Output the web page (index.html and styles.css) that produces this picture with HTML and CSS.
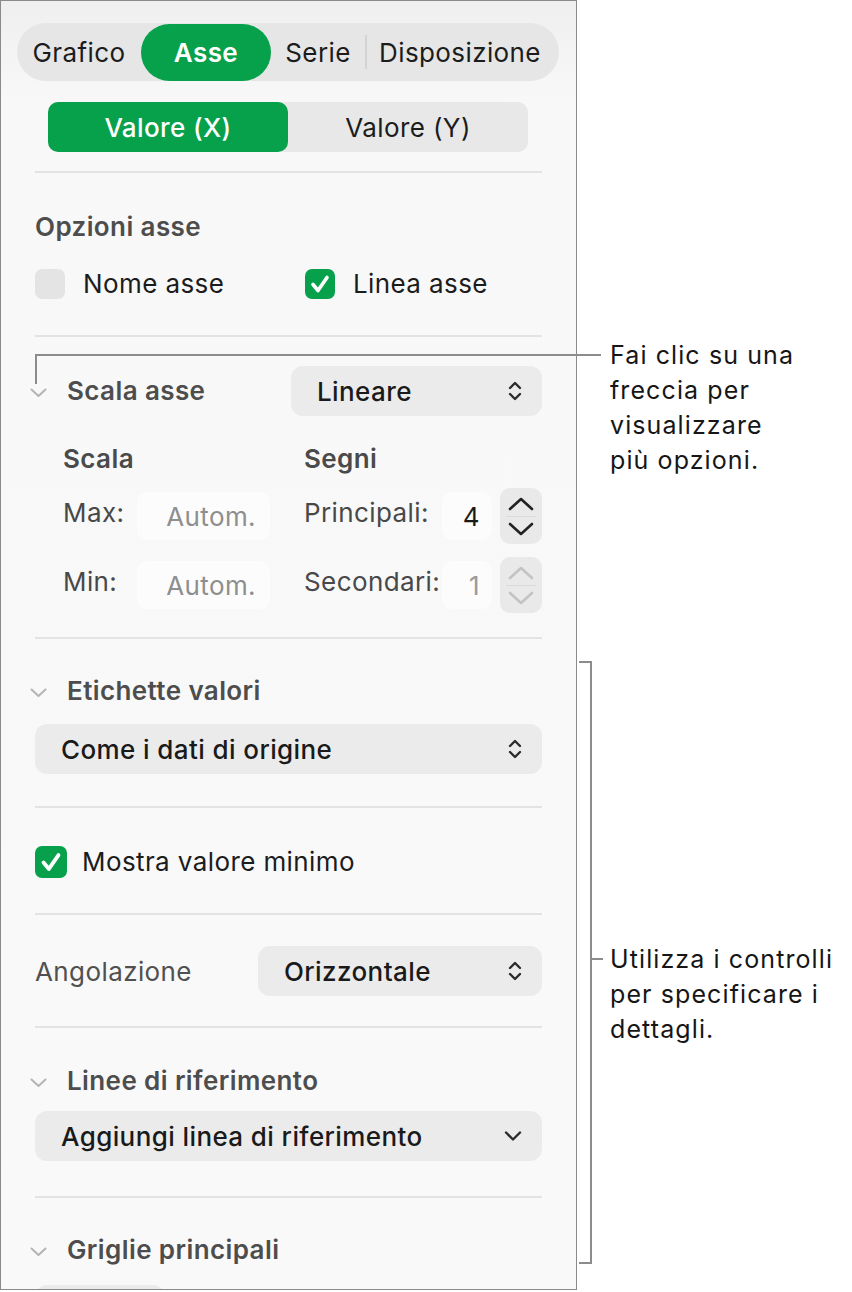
FILE: index.html
```html
<!DOCTYPE html>
<html lang="it">
<head>
  <meta charset="UTF-8">
  <title>Formato grafico - Asse</title>
  <link rel="stylesheet" href="styles.css">
</head>
<body>
  <div class="figure">

    <!-- Inspector panel -->
    <div class="inspector">
      <div class="tabs">
        <span class="tab tab-chart">Grafico</span>
        <span class="tab tab-axis active">Asse</span>
        <span class="tab tab-series">Serie</span>
        <span class="tab-sep"></span>
        <span class="tab tab-layout">Disposizione</span>
      </div>

      <div class="axis-switch">
        <span class="axis-btn active">Valore (X)</span>
        <span class="axis-btn">Valore (Y)</span>
      </div>

      <!-- Axis options -->
      <section class="group g-options">
        <div class="group-title">Opzioni asse</div>
        <div class="check-row">
          <label class="check check-name"><span class="box"></span>Nome asse</label>
          <label class="check"><span class="box on">
            <svg width="30" height="30" viewBox="0 0 30 30"><path d="M8 15.5 L13 21.5 L22 8.5" /></svg>
          </span>Linea asse</label>
        </div>
      </section>

      <!-- Axis scale -->
      <section class="group g-scale">
        <div class="disclosure-row">
          <span class="disclosure">
            <svg width="17" height="10" viewBox="0 0 17 10"><path d="M1.5 1.5 L8.5 8 L15.5 1.5" /></svg>
          </span>
          <span class="group-title">Scala asse</span>
          <div class="popup popup-scale">
            <span>Lineare</span>
            <svg class="updown" width="14" height="24" viewBox="0 0 14 24"><path d="M2 9 L7 4 L12 9 M2 15 L7 20 L12 15" /></svg>
          </div>
        </div>

        <div class="scale-grid">
          <div class="sub-title col-left">Scala</div>
          <div class="sub-title col-right">Segni</div>

          <div class="scale-label">Max:</div>
          <div class="field placeholder">Autom.</div>
          <div class="scale-label col-right">Principali:</div>
          <div class="field value">4</div>
          <div class="stepper">
            <svg width="26" height="14" viewBox="0 0 26 14"><path d="M2 12 L13 2 L24 12" /></svg>
            <span class="stepper-line"></span>
            <svg width="26" height="14" viewBox="0 0 26 14"><path d="M2 2 L13 12 L24 2" /></svg>
          </div>

          <div class="scale-label">Min:</div>
          <div class="field placeholder">Autom.</div>
          <div class="scale-label col-right">Secondari:</div>
          <div class="field value dim">1</div>
          <div class="stepper disabled">
            <svg width="26" height="14" viewBox="0 0 26 14"><path d="M2 12 L13 2 L24 12" /></svg>
            <span class="stepper-line"></span>
            <svg width="26" height="14" viewBox="0 0 26 14"><path d="M2 2 L13 12 L24 2" /></svg>
          </div>
        </div>
      </section>

      <!-- Value labels -->
      <section class="group g-labels">
        <div class="disclosure-row">
          <span class="disclosure">
            <svg width="17" height="10" viewBox="0 0 17 10"><path d="M1.5 1.5 L8.5 8 L15.5 1.5" /></svg>
          </span>
          <span class="group-title">Etichette valori</span>
        </div>
        <div class="popup popup-wide">
          <span>Come i dati di origine</span>
          <svg class="updown" width="14" height="24" viewBox="0 0 14 24"><path d="M2 9 L7 4 L12 9 M2 15 L7 20 L12 15" /></svg>
        </div>
      </section>

      <section class="group g-min">
        <label class="check"><span class="box on">
          <svg width="32" height="32" viewBox="0 0 30 30"><path d="M8 15.5 L13 21.5 L22 8.5" /></svg>
        </span>Mostra valore minimo</label>
      </section>

      <section class="group g-angle">
        <div class="angle-row">
          <span class="plain-label">Angolazione</span>
          <div class="popup popup-angle">
            <span>Orizzontale</span>
            <svg class="updown" width="14" height="24" viewBox="0 0 14 24"><path d="M2 9 L7 4 L12 9 M2 15 L7 20 L12 15" /></svg>
          </div>
        </div>
      </section>

      <!-- Reference lines -->
      <section class="group g-ref">
        <div class="disclosure-row">
          <span class="disclosure">
            <svg width="17" height="10" viewBox="0 0 17 10"><path d="M1.5 1.5 L8.5 8 L15.5 1.5" /></svg>
          </span>
          <span class="group-title">Linee di riferimento</span>
        </div>
        <div class="popup popup-wide">
          <span>Aggiungi linea di riferimento</span>
          <svg class="down" width="18" height="12" viewBox="0 0 18 12"><path d="M2 2.5 L9 9.5 L16 2.5" /></svg>
        </div>
      </section>

      <section class="group g-grid">
        <div class="disclosure-row">
          <span class="disclosure">
            <svg width="17" height="10" viewBox="0 0 17 10"><path d="M1.5 1.5 L8.5 8 L15.5 1.5" /></svg>
          </span>
          <span class="group-title">Griglie principali</span>
        </div>
        <div class="popup-stub"></div>
      </section>
    </div>

    <!-- Callouts -->
    <div class="lead lead-h"></div>
    <div class="lead lead-v"></div>
    <div class="note note-arrow">Fai clic su una<br>freccia per<br>visualizzare<br>più opzioni.</div>

    <div class="lead bracket"></div>
    <div class="lead bracket-top"></div>
    <div class="lead bracket-bottom"></div>
    <div class="lead bracket-tick"></div>
    <div class="note note-controls">Utilizza i controlli<br>per specificare i<br>dettagli.</div>
  </div>
</body>
</html>
```

FILE: styles.css
```css
/* Inspector panel with two callouts */
* {
  box-sizing: border-box;
}

body {
  margin: 0;
  background: #fff;
  font-family: Inter, "Noto Sans", sans-serif;
  color: #1c1c1c;
}

.figure {
  position: relative;
  width: 852px;
  height: 1292px;
}

.inspector {
  width: 577px;
  height: 1290px;
  border: 1px solid #8a8a8a;
  background: linear-gradient(#efefef, #f8f8f8 100px, #f9f9f9);
  padding: 22px 34px 0;
  overflow: hidden;
  letter-spacing: 0.4px;
}

/* Top tabs */
.tabs {
  display: flex;
  align-items: center;
  height: 58px;
  margin: 0 -17px 0 -18px;
  background: #e6e6e6;
  border-radius: 29px;
  font-size: 26px;
}

.tab {
  display: flex;
  align-items: center;
  justify-content: center;
  height: 100%;
}

.tab-chart { width: 124px; }
.tab-axis { width: 130px; }
.tab-series { width: 94px; }
.tab-layout { flex: 1; padding-right: 6px; }

.tab.active {
  height: 57px;
  background: #07a14c;
  color: #fff;
  border-radius: 29px;
  font-weight: 600;
}

.tab-sep {
  width: 2px;
  height: 34px;
  background: #d4d4d4;
}

.axis-switch {
  display: flex;
  width: 480px;
  height: 50px;
  margin: 21px 0 0 13px;
  background: #e8e8e8;
  border-radius: 10px;
  font-size: 26px;
}

.axis-btn {
  flex: 1;
  display: flex;
  align-items: center;
  justify-content: center;
}

.axis-btn.active {
  background: #07a14c;
  color: #fff;
  border-radius: 10px;
  font-weight: 500;
}

/* Sections */
.group {
  border-top: 2px solid #e3e3e3;
}

.group-title {
  font-size: 26px;
  line-height: 32px;
  font-weight: 600;
  color: #4d4d4d;
}

.g-options { margin-top: 19px; padding: 38px 0 35px; }
.g-scale { padding: 29px 0 24px; }
.g-labels { padding: 36px 0 32px; }
.g-min { padding: 38px 0 35px; }
.g-angle { padding: 31px 0 30px; }
.g-ref { padding: 37px 0 35px; }
.g-grid { padding: 36px 0 0; }

.check-row {
  display: flex;
  margin-top: 25px;
}

.check {
  display: flex;
  align-items: center;
  gap: 18px;
  font-size: 26px;
  line-height: 32px;
}

.check-name {
  width: 270px;
}

.box {
  width: 30px;
  height: 30px;
  border-radius: 7px;
  background: #e4e4e4;
}

.box.on {
  background: #07a14c;
}

.box svg {
  display: block;
  fill: none;
  stroke: #fff;
  stroke-width: 3.6;
  stroke-linecap: round;
  stroke-linejoin: round;
}

.g-min .check {
  gap: 15px;
}

.g-min .box {
  width: 32px;
  height: 32px;
}

/* Disclosure headers */
.disclosure-row {
  display: flex;
  align-items: center;
}

.disclosure {
  width: 37px;
  margin-left: -5px;
  padding-top: 4px;
}

.disclosure svg {
  display: block;
  fill: none;
  stroke: #b4b4b4;
  stroke-width: 2;
  stroke-linecap: round;
  stroke-linejoin: round;
}

/* Pop-up menus */
.popup {
  display: flex;
  align-items: center;
  justify-content: space-between;
  height: 50px;
  padding: 0 20px 0 26px;
  background: #ebebeb;
  border-radius: 12px;
  font-size: 26px;
  font-weight: 500;
  color: #1a1a1a;
}

.popup svg {
  fill: none;
  stroke: #2b2b2b;
  stroke-width: 2.4;
  stroke-linecap: round;
  stroke-linejoin: round;
}

.popup-scale {
  width: 251px;
  margin-left: auto;
}

.popup-wide {
  margin-top: 17px;
}

.g-ref .popup-wide {
  margin-top: 14px;
}

.angle-row {
  display: flex;
  align-items: center;
  justify-content: space-between;
}

.plain-label {
  font-size: 26px;
  color: #505050;
}

.popup-angle {
  width: 284px;
}

.popup-stub {
  width: 130px;
  height: 40px;
  margin-top: 19px;
  background: #ebebeb;
  border-radius: 12px;
}

/* Scale / ticks grid */
.scale-grid {
  display: grid;
  grid-template-columns: 74px 133px 34px 138px 50px 8px 42px;
  grid-template-rows: 32px 56px 56px;
  row-gap: 13px;
  margin: 27px 0 0 28px;
  align-items: center;
}

.sub-title {
  font-size: 26px;
  line-height: 32px;
  font-weight: 600;
  color: #4a4a4a;
}

.sub-title.col-left { grid-column: 1 / 3; }
.sub-title.col-right { grid-column: 4 / 8; }

.scale-label {
  font-size: 26px;
  color: #484848;
  margin-top: -8px;
  white-space: nowrap;
}

.scale-label.col-right {
  grid-column: 4;
}

.field {
  height: 48px;
  display: flex;
  align-items: center;
  justify-content: flex-end;
  padding-right: 14px;
  background: #fcfcfc;
  border-radius: 10px;
  font-size: 26px;
}

.field.placeholder {
  color: #8e8e8e;
}

.field.value {
  padding-right: 12px;
  color: #1a1a1a;
}

.field.dim {
  color: #9a9a9a;
}

.stepper {
  grid-column: 7;
  height: 56px;
  display: flex;
  flex-direction: column;
  align-items: center;
  justify-content: center;
  gap: 5px;
  background: #e9e9e9;
  border-radius: 10px;
}

.stepper svg {
  display: block;
  fill: none;
  stroke: #222;
  stroke-width: 2.6;
  stroke-linecap: round;
  stroke-linejoin: round;
}

.stepper.disabled svg {
  stroke: #c3c3c3;
}

.stepper-line {
  width: 30px;
  height: 1px;
  background: #dadada;
}

/* Callout leader lines and notes */
.lead {
  position: absolute;
  background: #8c8c8c;
}

.lead-h { left: 35px; top: 354px; width: 566px; height: 2px; }
.lead-v { left: 35px; top: 354px; width: 2px; height: 30px; }

.bracket { left: 590px; top: 661px; width: 2px; height: 603px; }
.bracket-top { left: 579px; top: 661px; width: 13px; height: 2px; }
.bracket-bottom { left: 579px; top: 1262px; width: 13px; height: 2px; }
.bracket-tick { left: 590px; top: 958px; width: 13px; height: 2px; }

.note {
  position: absolute;
  left: 610px;
  font-size: 25px;
  line-height: 35px;
  letter-spacing: 1.1px;
  color: #161616;
}

.note-arrow { top: 338px; }
.note-controls { top: 942px; }
```
